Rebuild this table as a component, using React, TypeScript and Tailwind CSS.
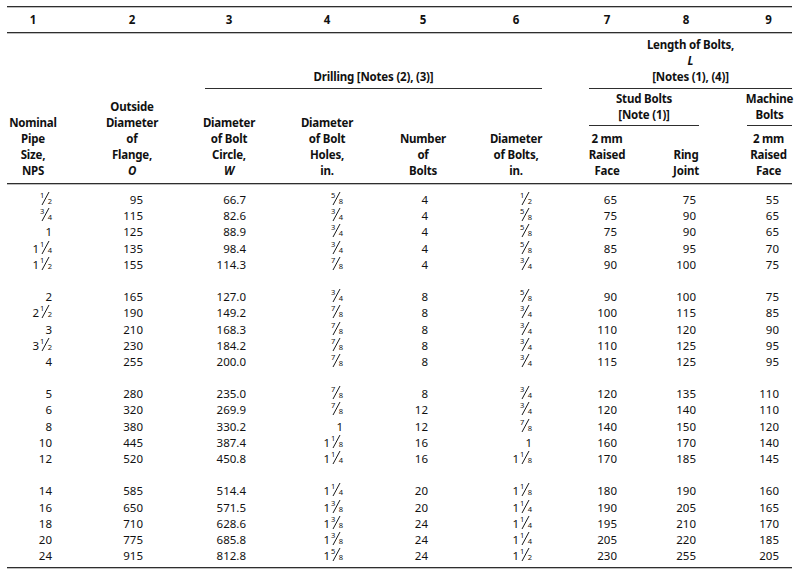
import React from 'react';

const COLS = 'grid grid-cols-[52px_146px_48px_148px_44px_142px_40px_118px_47px]';
const PAD = ['pr-[7px]', 'pr-[62px]', 'pr-[7px]', 'pr-[58px]', 'pr-[17px]', 'pr-[55px]', 'pr-[10px]', 'pr-[49px]', 'pr-[13px]'];

const groups: string[][][] = [
  [
    ['1/2', '95', '66.7', '5/8', '4', '1/2', '65', '75', '55'],
    ['3/4', '115', '82.6', '3/4', '4', '5/8', '75', '90', '65'],
    ['1', '125', '88.9', '3/4', '4', '5/8', '75', '90', '65'],
    ['1 1/4', '135', '98.4', '3/4', '4', '5/8', '85', '95', '70'],
    ['1 1/2', '155', '114.3', '7/8', '4', '3/4', '90', '100', '75'],
  ],
  [
    ['2', '165', '127.0', '3/4', '8', '5/8', '90', '100', '75'],
    ['2 1/2', '190', '149.2', '7/8', '8', '3/4', '100', '115', '85'],
    ['3', '210', '168.3', '7/8', '8', '3/4', '110', '120', '90'],
    ['3 1/2', '230', '184.2', '7/8', '8', '3/4', '110', '125', '95'],
    ['4', '255', '200.0', '7/8', '8', '3/4', '115', '125', '95'],
  ],
  [
    ['5', '280', '235.0', '7/8', '8', '3/4', '120', '135', '110'],
    ['6', '320', '269.9', '7/8', '12', '3/4', '120', '140', '110'],
    ['8', '380', '330.2', '1', '12', '7/8', '140', '150', '120'],
    ['10', '445', '387.4', '1 1/8', '16', '1', '160', '170', '140'],
    ['12', '520', '450.8', '1 1/4', '16', '1 1/8', '170', '185', '145'],
  ],
  [
    ['14', '585', '514.4', '1 1/4', '20', '1 1/8', '180', '190', '160'],
    ['16', '650', '571.5', '1 3/8', '20', '1 1/4', '190', '205', '165'],
    ['18', '710', '628.6', '1 3/8', '24', '1 1/4', '195', '210', '170'],
    ['20', '775', '685.8', '1 3/8', '24', '1 1/4', '205', '220', '185'],
    ['24', '915', '812.8', '1 5/8', '24', '1 1/2', '230', '255', '205'],
  ],
];

// built-up fraction: small numerator, slash, small denominator
const Frac = ({ n, d }: { n: string; d: string }) => (
  <span className="relative inline-block w-[13px] h-[13px] align-[-1px]">
    <span className="absolute left-[1px] top-0 text-[7.5px] leading-[7px]">{n}</span>
    <svg className="absolute left-0 top-0" width="13" height="13" viewBox="0 0 13 13">
      <line x1="3" y1="13" x2="10" y2="0" stroke="#1a1a1a" strokeWidth="1" />
    </svg>
    <span className="absolute right-0 bottom-0 text-[7.5px] leading-[7px]">{d}</span>
  </span>
);

const Value = ({ v }: { v: string }) => {
  const parts = v.split(' ');
  const frac = parts.find((p) => p.includes('/'));
  const whole = parts.find((p) => !p.includes('/'));
  if (!frac) return <>{v}</>;
  const [n, d] = frac.split('/');
  return (
    <>
      {whole}
      <Frac n={n} d={d} />
    </>
  );
};

const Rule = () => <div className="h-px bg-[#2e2e2e] shadow-[0_1px_0_#bdbdbd]" />;

const Head = ({ children, className = '' }: { children: React.ReactNode; className?: string }) => (
  <div className={`flex justify-center ${className}`}>
    <div className="w-max whitespace-nowrap text-center">{children}</div>
  </div>
);

export default function App() {
  return (
    <div
      className="w-[806px] h-[574px] overflow-hidden bg-white text-[#111] text-[12px]"
      style={{ fontFamily: '"Noto Sans", Lato, sans-serif' }}
    >
      <div className="ml-[7px] w-[785px] pt-[6px]">
        <Rule />
        <div className={`${COLS} h-[25px] items-center font-bold leading-[16px] text-[11.5px]`}>
          {['1', '2', '3', '4', '5', '6', '7', '8', '9'].map((n) => (
            <Head key={n}>{n}</Head>
          ))}
        </div>
        <Rule />

        {/* column headings */}
        <div className={`${COLS} grid-rows-[56px_38px_56px] font-bold leading-[16px] text-[11.5px] tracking-[-0.2px]`}>
          <div className="col-start-1 row-start-1 row-span-3 flex flex-col justify-end pb-[4px]">
            <Head>
              Nominal<br />Pipe<br />Size,<br />NPS
            </Head>
          </div>
          <div className="col-start-2 row-start-1 row-span-3 flex flex-col justify-end pb-[4px]">
            <Head>
              Outside<br />Diameter<br />of<br />Flange,<br /><i>O</i>
            </Head>
          </div>
          <div className="col-start-3 col-span-4 row-start-1 flex flex-col justify-end">
            <div className="mr-[45px] border-b border-[#2e2e2e] pb-[3px]">
              <Head>Drilling [Notes (2), (3)]</Head>
            </div>
          </div>
          <div className="col-start-7 col-span-3 row-start-1 flex flex-col justify-end">
            <div className="ml-[2px] border-b border-[#2e2e2e] pb-[3px]">
              <Head>
                Length of Bolts,<br /><i>L</i><br />[Notes (1), (4)]
              </Head>
            </div>
          </div>

          <div className="col-start-3 row-start-2 row-span-2 flex flex-col justify-end pb-[4px]">
            <Head>
              Diameter<br />of Bolt<br />Circle,<br /><i>W</i>
            </Head>
          </div>
          <div className="col-start-4 row-start-2 row-span-2 flex flex-col justify-end pb-[4px]">
            <Head>
              Diameter<br />of Bolt<br />Holes,<br />in.
            </Head>
          </div>
          <div className="col-start-5 row-start-2 row-span-2 flex flex-col justify-end pb-[4px]">
            <Head>
              Number<br />of<br />Bolts
            </Head>
          </div>
          <div className="col-start-6 row-start-2 row-span-2 flex flex-col justify-end pb-[4px]">
            <Head>
              Diameter<br />of Bolts,<br />in.
            </Head>
          </div>
          <div className="col-start-7 col-span-2 row-start-2 flex flex-col justify-end pb-[1px]">
            <div className="ml-[2px] mr-[46px] border-b border-[#2e2e2e] pb-[2px]">
              <Head>
                Stud Bolts<br />[Note (1)]
              </Head>
            </div>
          </div>
          <div className="col-start-9 row-start-2 flex flex-col justify-end pb-[1px]">
            <div className="ml-[2px] border-b border-[#2e2e2e] pb-[2px]">
              <Head>
                Machine<br />Bolts
              </Head>
            </div>
          </div>

          <div className="col-start-7 row-start-3 flex flex-col justify-end pb-[4px]">
            <Head>
              2 mm<br />Raised<br />Face
            </Head>
          </div>
          <div className="col-start-8 row-start-3 flex flex-col justify-end pb-[4px]">
            <Head>
              Ring<br />Joint
            </Head>
          </div>
          <div className="col-start-9 row-start-3 flex flex-col justify-end pb-[4px]">
            <Head>
              2 mm<br />Raised<br />Face
            </Head>
          </div>
        </div>
        <Rule />

        {/* data */}
        <div className="pt-[8px] pb-[3px] leading-[16.2px] text-[11.5px]">
          {groups.map((rows, gi) => (
            <div key={gi} className={gi > 0 ? 'pt-[16.2px]' : ''}>
              {rows.map((row, ri) => (
                <div key={ri} className={`${COLS} h-[16.2px]`}>
                  {row.map((v, ci) => (
                    <div key={ci} className={`text-right whitespace-nowrap ${PAD[ci]}`}>
                      <Value v={v} />
                    </div>
                  ))}
                </div>
              ))}
            </div>
          ))}
        </div>
        <Rule />
      </div>
    </div>
  );
}
